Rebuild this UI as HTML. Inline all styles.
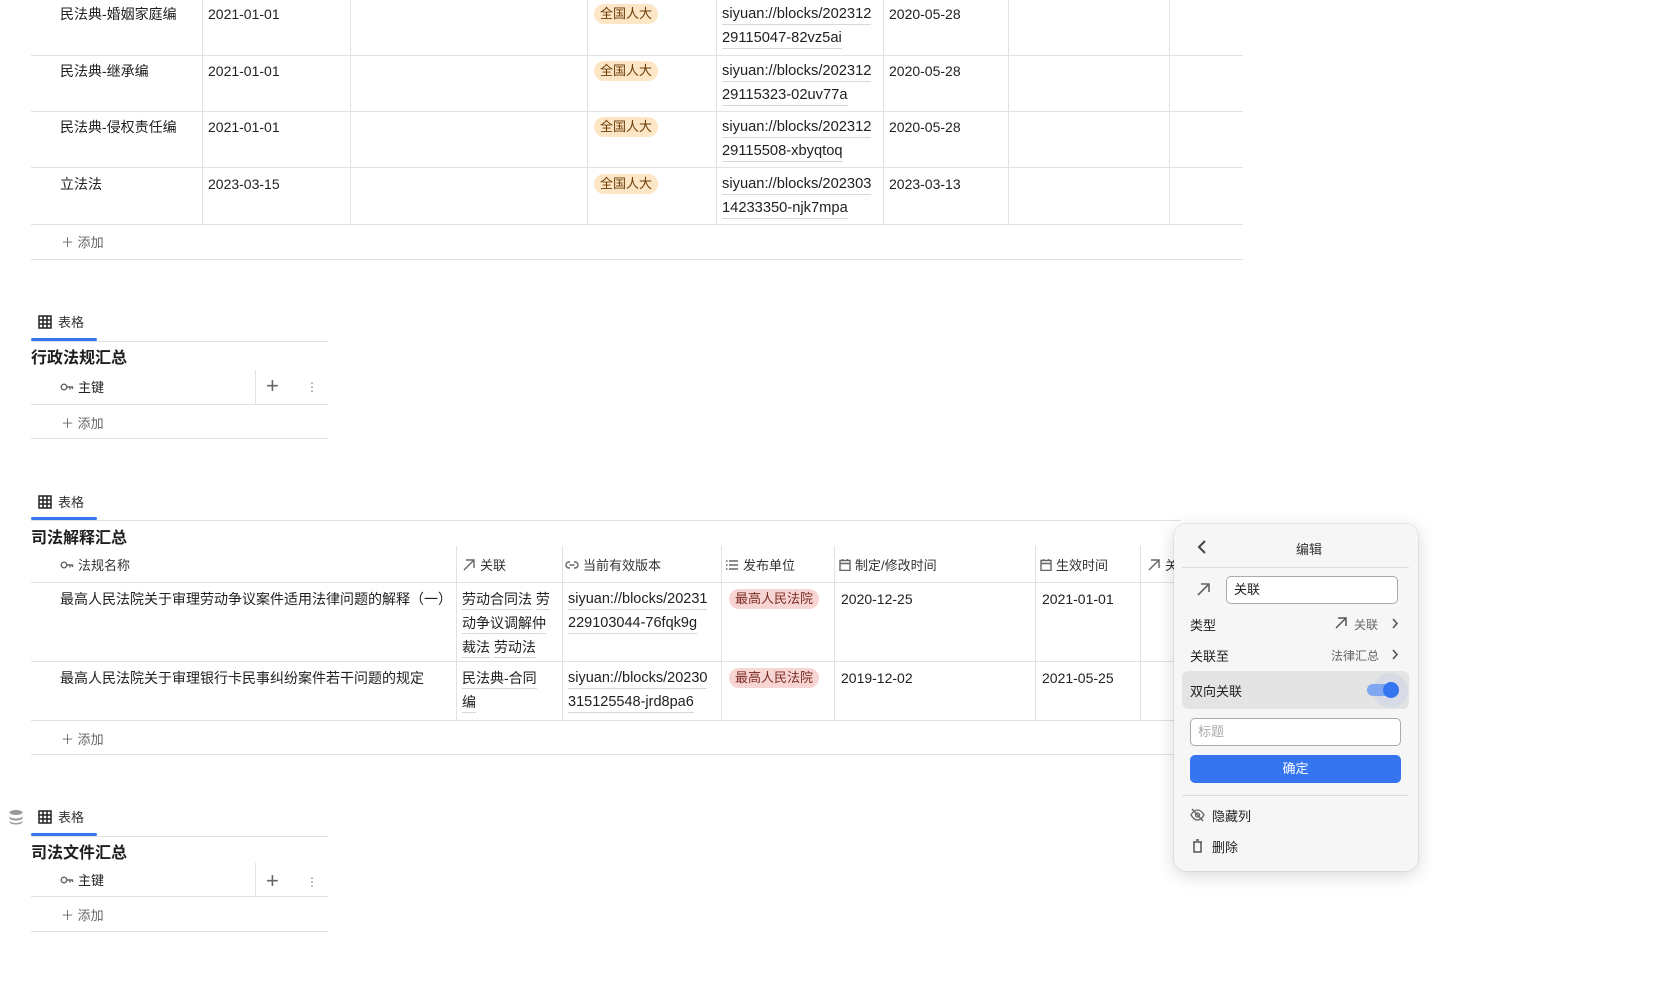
<!DOCTYPE html>
<html><head><meta charset="utf-8">
<style>
*{margin:0;padding:0;box-sizing:border-box}
body{width:1675px;height:985px;overflow:hidden;background:#fff;font-family:"Liberation Sans","Noto Sans CJK SC",sans-serif;font-size:14px;color:#202124;position:relative}
.a{position:absolute;white-space:nowrap}
.h{position:absolute;height:1px;background:#e2e2e2}
.v{position:absolute;width:1px;background:#e2e2e2}
.t{position:absolute;line-height:22px}
.tag{position:absolute;padding:0 6px;border-radius:10px;line-height:20px;font-size:13px}
.g{background:#fde6c6;color:#6a3c05}
.r{background:#f7d5d2;color:#7d2b25}
.lk{position:absolute;line-height:22px}
.lk span{border-bottom:1px solid #d8d8d8;display:inline-block;line-height:20px;margin-bottom:2px}
.add{position:absolute;color:#666;font-size:13px}
.hd{position:absolute;font-size:13px;color:#333;display:flex;align-items:center;gap:4px}
.tab{position:absolute;font-size:13px;color:#333;display:flex;align-items:center;gap:6px}
.ttl{position:absolute;font-size:16px;font-weight:bold;color:#1e1e1e}
.ic{stroke:#666;fill:none;stroke-width:1.4}
</style></head><body>

<!-- top table -->
<div class="h" style="left:31px;top:55px;width:1212px"></div>
<div class="h" style="left:31px;top:111px;width:1212px"></div>
<div class="h" style="left:31px;top:167px;width:1212px"></div>
<div class="h" style="left:31px;top:224px;width:1212px"></div>
<div class="h" style="left:31px;top:259px;width:1212px"></div>
<div class="v" style="left:202px;top:0;height:224px"></div>
<div class="v" style="left:350px;top:0;height:224px"></div>
<div class="v" style="left:587px;top:0;height:224px"></div>
<div class="v" style="left:716px;top:0;height:224px"></div>
<div class="v" style="left:883px;top:0;height:224px"></div>
<div class="v" style="left:1008px;top:0;height:224px"></div>
<div class="v" style="left:1169px;top:0;height:224px"></div>

<div class="t" style="left:60px;top:3px">民法典-婚姻家庭编</div>
<div class="t" style="left:208px;top:3px">2021-01-01</div>
<div class="tag g" style="left:594px;top:4px">全国人大</div>
<div class="lk" style="left:722px;top:3px;font-size:14.7px"><span>siyuan://blocks/202312</span><br><span>29115047-82vz5ai</span></div>
<div class="t" style="left:889px;top:3px">2020-05-28</div>

<div class="t" style="left:60px;top:60px">民法典-继承编</div>
<div class="t" style="left:208px;top:60px">2021-01-01</div>
<div class="tag g" style="left:594px;top:61px">全国人大</div>
<div class="lk" style="left:722px;top:60px;font-size:14.7px"><span>siyuan://blocks/202312</span><br><span>29115323-02uv77a</span></div>
<div class="t" style="left:889px;top:60px">2020-05-28</div>

<div class="t" style="left:60px;top:116px">民法典-侵权责任编</div>
<div class="t" style="left:208px;top:116px">2021-01-01</div>
<div class="tag g" style="left:594px;top:117px">全国人大</div>
<div class="lk" style="left:722px;top:116px;font-size:14.7px"><span>siyuan://blocks/202312</span><br><span>29115508-xbyqtoq</span></div>
<div class="t" style="left:889px;top:116px">2020-05-28</div>

<div class="t" style="left:60px;top:173px">立法法</div>
<div class="t" style="left:208px;top:173px">2023-03-15</div>
<div class="tag g" style="left:594px;top:174px">全国人大</div>
<div class="lk" style="left:722px;top:173px;font-size:14.7px"><span>siyuan://blocks/202303</span><br><span>14233350-njk7mpa</span></div>
<div class="t" style="left:889px;top:173px">2023-03-13</div>
<div class="add" style="left:61px;top:232px">＋ 添加</div>

<!-- section 2 -->
<div class="tab" style="left:38px;top:312px"><svg width="14" height="14" viewBox="0 0 14 14"><path d="M1 1h12v12H1zM1 5h12M1 9h12M5 1v12M9 1v12" stroke="#222" stroke-width="1.5" fill="none"/></svg>表格</div>
<div style="position:absolute;left:31px;top:338px;width:66px;height:3px;background:#3575f0;border-radius:2px"></div>
<div class="h" style="left:31px;top:341px;width:297px"></div>
<div class="ttl" style="left:31px;top:344px">行政法规汇总</div>
<div class="hd" style="left:60px;top:377px"><svg width="14" height="10" viewBox="0 0 14 10"><circle cx="4" cy="5" r="2.8" class="ic"/><path d="M7 5h6M10 5v2.5M12.5 5v2" class="ic"/></svg><span style="color:#222">主键</span></div>
<div class="v" style="left:255px;top:370px;height:35px"></div>
<div class="a" style="left:266px;top:375px;font-size:22px;color:#666;line-height:22px">+</div>
<div class="a" style="left:306px;top:380px;color:#777;font-size:12px;line-height:14px;width:3px">⋮</div>
<div class="h" style="left:31px;top:404px;width:297px"></div>
<div class="add" style="left:61px;top:413px">＋ 添加</div>
<div class="h" style="left:31px;top:438px;width:297px"></div>

<!-- section 3 -->
<div class="tab" style="left:38px;top:492px"><svg width="14" height="14" viewBox="0 0 14 14"><path d="M1 1h12v12H1zM1 5h12M1 9h12M5 1v12M9 1v12" stroke="#222" stroke-width="1.5" fill="none"/></svg>表格</div>
<div style="position:absolute;left:31px;top:517px;width:66px;height:3px;background:#3575f0;border-radius:2px"></div>
<div class="h" style="left:31px;top:520px;width:1150px"></div>
<div class="ttl" style="left:31px;top:524px">司法解释汇总</div>
<div class="hd" style="left:60px;top:555px"><svg width="14" height="10" viewBox="0 0 14 10"><circle cx="4" cy="5" r="2.8" class="ic"/><path d="M7 5h6M10 5v2.5M12.5 5v2" class="ic"/></svg>法规名称</div>
<div class="hd" style="left:462px;top:555px"><svg width="14" height="14" viewBox="0 0 14 14"><path d="M2 12L12 2M4 2h8v8" class="ic"/></svg>关联</div>
<div class="hd" style="left:565px;top:555px"><svg width="14" height="10" viewBox="0 0 14 10"><path d="M5 2H4a3 3 0 0 0 0 6h1M9 2h1a3 3 0 0 1 0 6H9M4.5 5h5" class="ic"/></svg>当前有效版本</div>
<div class="hd" style="left:725px;top:555px"><svg width="14" height="12" viewBox="0 0 14 12"><path d="M1 2h1.5M4 2h9M1 6h1.5M4 6h9M1 10h1.5M4 10h9" class="ic"/></svg>发布单位</div>
<div class="hd" style="left:839px;top:555px"><svg width="12" height="13" viewBox="0 0 12 13"><path d="M1 2.5h10v10H1zM1 5.5h10M3.5 1v2M8.5 1v2" class="ic"/></svg>制定/修改时间</div>
<div class="hd" style="left:1040px;top:555px"><svg width="12" height="13" viewBox="0 0 12 13"><path d="M1 2.5h10v10H1zM1 5.5h10M3.5 1v2M8.5 1v2" class="ic"/></svg>生效时间</div>
<div class="hd" style="left:1147px;top:555px"><svg width="14" height="14" viewBox="0 0 14 14"><path d="M2 12L12 2M4 2h8v8" class="ic"/></svg>关</div>
<div class="h" style="left:31px;top:582px;width:1150px"></div>
<div class="v" style="left:456px;top:546px;height:174px"></div>
<div class="v" style="left:562px;top:546px;height:174px"></div>
<div class="v" style="left:721px;top:546px;height:174px"></div>
<div class="v" style="left:834px;top:546px;height:174px"></div>
<div class="v" style="left:1035px;top:546px;height:174px"></div>
<div class="v" style="left:1140px;top:546px;height:174px"></div>

<div class="t" style="left:60px;top:588px">最高人民法院关于审理劳动争议案件适用法律问题的解释（一）</div>
<div class="lk" style="left:462px;top:588px"><span>劳动合同法</span> <span>劳</span><br><span>动争议调解仲</span><br><span>裁法</span> <span>劳动法</span></div>
<div class="lk" style="left:568px;top:588px;font-size:14.5px"><span>siyuan://blocks/20231</span><br><span>229103044-76fqk9g</span></div>
<div class="tag r" style="left:729px;top:589px">最高人民法院</div>
<div class="t" style="left:841px;top:588px">2020-12-25</div>
<div class="t" style="left:1042px;top:588px">2021-01-01</div>
<div class="h" style="left:31px;top:661px;width:1150px"></div>

<div class="t" style="left:60px;top:667px">最高人民法院关于审理银行卡民事纠纷案件若干问题的规定</div>
<div class="lk" style="left:462px;top:667px"><span>民法典-合同</span><br><span>编</span></div>
<div class="lk" style="left:568px;top:667px;font-size:14.5px"><span>siyuan://blocks/20230</span><br><span>315125548-jrd8pa6</span></div>
<div class="tag r" style="left:729px;top:668px">最高人民法院</div>
<div class="t" style="left:841px;top:667px">2019-12-02</div>
<div class="t" style="left:1042px;top:667px">2021-05-25</div>
<div class="h" style="left:31px;top:720px;width:1150px"></div>
<div class="add" style="left:61px;top:729px">＋ 添加</div>
<div class="h" style="left:31px;top:754px;width:1150px"></div>

<!-- section 4 -->
<svg class="a" style="left:8px;top:809px" width="16" height="16" viewBox="0 0 16 16"><ellipse cx="8" cy="3.5" rx="6.5" ry="2.5" fill="#999"/><path d="M1.5 7c0 1.4 2.9 2.5 6.5 2.5s6.5-1.1 6.5-2.5v2c0 1.4-2.9 2.5-6.5 2.5S1.5 10.4 1.5 9zM1.5 11.5c0 1.4 2.9 2.5 6.5 2.5s6.5-1.1 6.5-2.5v1.5c0 1.4-2.9 2.5-6.5 2.5S1.5 14.4 1.5 13z" fill="#999"/></svg>
<div class="tab" style="left:38px;top:807px"><svg width="14" height="14" viewBox="0 0 14 14"><path d="M1 1h12v12H1zM1 5h12M1 9h12M5 1v12M9 1v12" stroke="#222" stroke-width="1.5" fill="none"/></svg>表格</div>
<div style="position:absolute;left:31px;top:833px;width:66px;height:3px;background:#3575f0;border-radius:2px"></div>
<div class="h" style="left:31px;top:836px;width:297px"></div>
<div class="ttl" style="left:31px;top:839px">司法文件汇总</div>
<div class="hd" style="left:60px;top:870px"><svg width="14" height="10" viewBox="0 0 14 10"><circle cx="4" cy="5" r="2.8" class="ic"/><path d="M7 5h6M10 5v2.5M12.5 5v2" class="ic"/></svg><span style="color:#222">主键</span></div>
<div class="v" style="left:255px;top:863px;height:34px"></div>
<div class="a" style="left:266px;top:870px;font-size:22px;color:#666;line-height:22px">+</div>
<div class="a" style="left:306px;top:875px;color:#777;font-size:12px;line-height:14px;width:3px">⋮</div>
<div class="h" style="left:31px;top:896px;width:297px"></div>
<div class="add" style="left:61px;top:905px">＋ 添加</div>
<div class="h" style="left:31px;top:931px;width:297px"></div>

<!-- popup -->
<div style="position:absolute;left:1174px;top:524px;width:244px;height:347px;background:#f6f6f6;border-radius:12px;box-shadow:0 4px 18px rgba(0,0,0,.16),0 0 0 1px rgba(0,0,0,.05)"></div>
<svg class="a" style="left:1196px;top:540px" width="12" height="14" viewBox="0 0 12 14"><path d="M9 1L3 7l6 6" stroke="#444" stroke-width="2" fill="none"/></svg>
<div class="a" style="left:1296px;top:539px;font-size:13px;color:#333">编辑</div>
<div class="h" style="left:1182px;top:567px;width:227px;background:#ddd"></div>
<svg class="a" style="left:1196px;top:582px" width="15" height="15" viewBox="0 0 15 15"><path d="M2 13L13 2M5 2h8v8" stroke="#666" stroke-width="1.6" fill="none"/></svg>
<div class="a" style="left:1226px;top:576px;width:172px;height:28px;border:1px solid #aaa;border-radius:5px;background:#fff;font-size:13px;line-height:26px;padding-left:7px">关联</div>
<div class="a" style="left:1190px;top:615px;font-size:13px">类型</div>
<svg class="a" style="left:1334px;top:616px" width="14" height="14" viewBox="0 0 14 14"><path d="M2 12L12 2M4 2h8v8" stroke="#555" stroke-width="1.5" fill="none"/></svg>
<div class="a" style="left:1354px;top:616px;font-size:12px;color:#666">关联</div>
<svg class="a" style="left:1391px;top:618px" width="8" height="11" viewBox="0 0 8 11"><path d="M2 1l4 4.5L2 10" stroke="#555" stroke-width="1.6" fill="none"/></svg>
<div class="a" style="left:1190px;top:646px;font-size:13px">关联至</div>
<div class="a" style="left:1331px;top:647px;font-size:12px;color:#666">法律汇总</div>
<svg class="a" style="left:1391px;top:649px" width="8" height="11" viewBox="0 0 8 11"><path d="M2 1l4 4.5L2 10" stroke="#555" stroke-width="1.6" fill="none"/></svg>
<div class="a" style="left:1182px;top:671px;width:227px;height:38px;background:#e4e4e4;border-radius:6px"></div>
<div class="a" style="left:1190px;top:681px;font-size:13px">双向关联</div>
<div class="a" style="left:1373px;top:673px;width:35px;height:35px;border-radius:50%;background:rgba(53,117,240,.08)"></div>
<div class="a" style="left:1367px;top:684px;width:28px;height:12px;border-radius:6px;background:#7fa6ee"></div>
<div class="a" style="left:1383px;top:682px;width:16px;height:16px;border-radius:50%;background:#3575f0"></div>
<div class="a" style="left:1190px;top:718px;width:211px;height:28px;border:1px solid #aaa;border-radius:5px;background:#fff;font-size:13px;line-height:26px;padding-left:7px;color:#aaa">标题</div>
<div class="a" style="left:1190px;top:755px;width:211px;height:28px;border-radius:5px;background:#3575f0;color:#fff;font-size:13px;line-height:28px;text-align:center">确定</div>
<div class="h" style="left:1182px;top:795px;width:227px;background:#ddd"></div>
<svg class="a" style="left:1190px;top:808px" width="15" height="14" viewBox="0 0 15 14"><path d="M1 7c2-3.5 4-5 6.5-5S12 3.5 14 7c-2 3.5-4 5-6.5 5S3 10.5 1 7z" stroke="#666" stroke-width="1.3" fill="none"/><circle cx="7.5" cy="7" r="2" stroke="#666" stroke-width="1.3" fill="none"/><path d="M2 1l11 12" stroke="#666" stroke-width="1.3"/></svg>
<div class="a" style="left:1212px;top:806px;font-size:13px">隐藏列</div>
<svg class="a" style="left:1192px;top:839px" width="11" height="14" viewBox="0 0 11 14"><path d="M1 3h9M2 3v10h7V3M4 1h3" stroke="#555" stroke-width="1.5" fill="none"/></svg>
<div class="a" style="left:1212px;top:837px;font-size:13px">删除</div>
</body></html>
